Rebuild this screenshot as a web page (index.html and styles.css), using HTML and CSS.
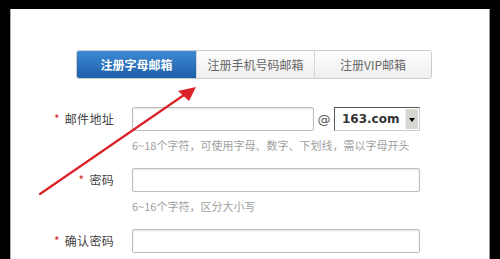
FILE: index.html
```html
<!DOCTYPE html>
<html>
	<head>
		<meta charset="UTF-8">
		<title>注册</title>
		<link rel="stylesheet" href="styles.css">
	</head>
	<body>
		<div id="panel">
			<ul id="tabs">
				<li class="active">注册字母邮箱</li>
				<li>注册手机号码邮箱</li>
				<li>注册VIP邮箱</li>
			</ul>
			<div class="row">
				<label class="lbl"><i>*</i>邮件地址</label>
				<div class="field">
					<div class="mail">
						<input type="text" class="ipt short">
						<span class="at">@</span>
						<div class="sel">
							<span>163.com</span>
							<b class="drop"></b>
						</div>
					</div>
					<p class="tip">6~18个字符，可使用字母、数字、下划线，需以字母开头</p>
				</div>
			</div>
			<div class="row">
				<label class="lbl"><i>*</i>密码</label>
				<div class="field">
					<input type="password" class="ipt">
					<p class="tip">6~16个字符，区分大小写</p>
				</div>
			</div>
			<div class="row">
				<label class="lbl"><i>*</i>确认密码</label>
				<div class="field">
					<input type="password" class="ipt">
				</div>
			</div>
			<!-- 红色箭头 -->
			<svg id="arrow" width="500" height="259" viewBox="0 0 500 259">
				<line x1="40" y1="194" x2="184" y2="95" stroke="#dc2228" stroke-width="2.2" stroke-linecap="round"/>
				<polygon points="196,87 178,91 189,101" fill="#dc2228"/>
			</svg>
		</div>
	</body>
</html>
```

FILE: styles.css
```css
html,
body {
	margin: 0;
	padding: 0;
	background: #000;
	height: 259px;
	overflow: hidden;
}

#panel {
	margin: 9px 10px 0 10px;
	height: 250px;
	background: #fff;
	border-left: 1px solid #aaa;
	border-right: 1px solid #999;
	box-sizing: border-box;
	padding-top: 41px;
	overflow: hidden;
	font-family: "Noto Sans CJK SC", "Noto Sans", sans-serif;
}

ul {
	margin: 0;
	padding: 0;
	list-style: none;
}

#tabs {
	display: flex;
	margin-left: 65px;
	width: 356px;
	height: 29px;
	border: 1px solid #ccc;
	border-radius: 3px;
	box-sizing: border-box;
	overflow: hidden;
}

#tabs li {
	flex: 1;
	text-align: center;
	line-height: 27px;
	font-size: 12px;
	color: #666;
	background: linear-gradient(#fdfdfd, #efefef);
	border-left: 1px solid #d6d6d6;
}

#tabs li:first-child {
	border-left: none;
	flex: 0 0 119px;
}

#tabs li:nth-child(2) {
	flex: 0 0 117px;
}

#tabs .active {
	background: linear-gradient(#3e89d3, #1c5ea9);
	color: #fff;
	font-weight: bold;
}

.row {
	display: flex;
	align-items: flex-start;
}

#tabs + .row {
	margin-top: 28px;
}

.lbl {
	width: 103px;
	text-align: right;
	font-size: 12px;
	letter-spacing: 0.3px;
	color: #444;
	line-height: 24px;
	margin-right: 18px;
}

.lbl i {
	font-style: normal;
	color: #d02a2a;
	margin-right: 5px;
}

.field {
	display: flex;
	flex-direction: column;
}

.ipt {
	width: 288px;
	height: 24px;
	margin: 0;
	border: 1px solid #bdbdbd;
	border-radius: 2px;
	box-sizing: border-box;
	box-shadow: inset 0 1px 2px #e4e4e4;
	outline: none;
}

.ipt.short {
	width: 182px;
}

.mail {
	display: flex;
	align-items: center;
}

.at {
	width: 20px;
	text-align: center;
	font-size: 13px;
	color: #555;
	font-family: "DejaVu Sans", sans-serif;
}

.sel {
	display: flex;
	align-items: center;
	width: 86px;
	height: 24px;
	box-sizing: border-box;
	border: 1px solid #555;
	border-right-color: #ccc;
	border-bottom-color: #ccc;
	padding: 1px;
}

.sel span {
	flex: 1;
	padding-left: 6px;
	font-family: "DejaVu Sans", sans-serif;
	font-weight: bold;
	font-size: 12px;
	color: #333;
}

.drop {
	width: 12px;
	height: 20px;
	background: #d8d6d0;
	border-left: 1px solid #eee;
	position: relative;
}

.drop:after {
	content: "";
	position: absolute;
	left: 3px;
	top: 9px;
	border-left: 3px solid transparent;
	border-right: 3px solid transparent;
	border-top: 4px solid #000;
}

.tip {
	margin: 7px 0 16px 0;
	font-size: 11px;
	line-height: 14px;
	color: #a0a0a0;
}

#arrow {
	position: absolute;
	left: 0;
	top: 0;
	pointer-events: none;
}
```
